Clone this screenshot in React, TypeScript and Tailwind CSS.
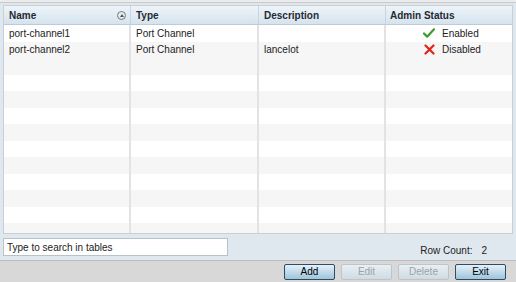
import React from 'react';

const rows = [
  { name: 'port-channel1', type: 'Port Channel', desc: '', enabled: true },
  { name: 'port-channel2', type: 'Port Channel', desc: 'lancelot', enabled: false },
];

const EMPTY_ROWS = 11;

const Check = () => (
  <svg width="12" height="10" viewBox="0 0 13 11">
    <path d="M1 6 L4.5 9.5 L12 1.5" fill="none" stroke="#3a9a2a" strokeWidth="2.4" strokeLinecap="round" strokeLinejoin="round" />
  </svg>
);

const Cross = () => (
  <svg width="11" height="11" viewBox="0 0 11 11">
    <path d="M1.5 1.5 L9.5 9.5 M9.5 1.5 L1.5 9.5" fill="none" stroke="#e0231c" strokeWidth="2.2" strokeLinecap="round" />
  </svg>
);

const Btn = ({ label, disabled, primary }: { label: string; disabled?: boolean; primary?: boolean }) => (
  <button
    className={`w-[51px] h-[16px] text-[10px] leading-none rounded-[2px] border ${
      disabled
        ? 'border-[#b9c6cf] bg-gradient-to-b from-[#e9eff3] to-[#cfdbe3] text-[#9aa3aa]'
        : primary
        ? 'border-[#2d4c63] bg-gradient-to-b from-[#e4f0f8] to-[#9fc4dd] text-black'
        : 'border-[#5f7f96] bg-gradient-to-b from-[#e4f0f8] to-[#a7c8de] text-black'
    }`}
  >
    {label}
  </button>
);

export default function App() {
  return (
    <div
      className="w-[516px] h-[282px] bg-[#dfe8ef] flex flex-col overflow-hidden text-[10px] text-[#222]"
      style={{ fontFamily: '"Liberation Sans", Arial, sans-serif' }}
    >
      <div className="h-[3px] bg-[#ececec] border-b border-[#c9c9c9]" />
      <div className="flex-1 flex flex-col px-[3px] pt-[2px]">
        {/* Table */}
        <div className="h-[229px] bg-white border border-[#c8d0d6] flex flex-col overflow-hidden">
          <div className="h-[19px] shrink-0 flex bg-gradient-to-b from-[#eef4f9] to-[#d5e3ee] border-b border-[#bfcbd4] font-bold text-[#1f2a33]">
            <div className="w-[127px] flex items-center justify-between pl-[5px] pr-[4px] border-r border-[#c9d4dc]">
              <span>Name</span>
              <span className="w-[9px] h-[9px] rounded-full border border-[#777] flex items-center justify-center">
                <span className="w-0 h-0 border-l-[2.5px] border-r-[2.5px] border-b-[3px] border-l-transparent border-r-transparent border-b-[#555]" />
              </span>
            </div>
            <div className="w-[128px] flex items-center pl-[5px] border-r border-[#c9d4dc]">Type</div>
            <div className="w-[127px] flex items-center pl-[5px] border-r border-[#c9d4dc]">Description</div>
            <div className="flex-1 flex items-center pl-[4px]">Admin Status</div>
          </div>
          <div className="flex-1 flex flex-col">
            {rows.map((r, i) => (
              <div key={r.name} className={`h-[16.5px] shrink-0 flex items-center ${i % 2 ? 'bg-[#f6f6f6]' : 'bg-white'}`}>
                <div className="w-[127px] h-full flex items-center pl-[5px] border-r-2 border-[#e3e3e3]">{r.name}</div>
                <div className="w-[128px] h-full flex items-center pl-[5px] border-r-2 border-[#e3e3e3]">{r.type}</div>
                <div className="w-[127px] h-full flex items-center pl-[5px] border-r-2 border-[#e3e3e3]">{r.desc}</div>
                <div className="flex-1 h-full flex items-center pl-[37px] gap-[7px]">
                  <span className="w-[12px] flex justify-center">{r.enabled ? <Check /> : <Cross />}</span>
                  <span>{r.enabled ? 'Enabled' : 'Disabled'}</span>
                </div>
              </div>
            ))}
            {Array.from({ length: EMPTY_ROWS }).map((_, i) => (
              <div key={i} className={`h-[16.5px] flex shrink-0 ${i % 2 === 0 ? 'bg-[#f6f6f6]' : 'bg-white'}`}>
                <div className="w-[127px] h-full border-r-2 border-[#e3e3e3]" />
                <div className="w-[128px] h-full border-r-2 border-[#e3e3e3]" />
                <div className="w-[127px] h-full border-r-2 border-[#e3e3e3]" />
                <div className="flex-1" />
              </div>
            ))}
          </div>
        </div>
        {/* Search */}
        <div className="h-[26px] flex items-center">
          <input
            readOnly
            value="Type to search in tables"
            className="w-[225px] h-[18px] bg-white border border-[#b8c2c9] px-[3px] text-[10px] text-[#222] outline-none"
          />
          <div className="flex-1 flex justify-end items-center pr-[26px] pt-[6px] text-[#222]">
            <span>Row Count:</span>
            <span className="ml-[9px]">2</span>
          </div>
        </div>
      </div>
      {/* Toolbar */}
      <div className="h-[22px] bg-[#d8d8d8] border-t border-[#bdbdbd] flex items-center justify-end gap-[6px] pr-[10px]">
        <Btn label="Add" primary />
        <Btn label="Edit" disabled />
        <Btn label="Delete" disabled />
        <Btn label="Exit" primary />
      </div>
    </div>
  );
}
